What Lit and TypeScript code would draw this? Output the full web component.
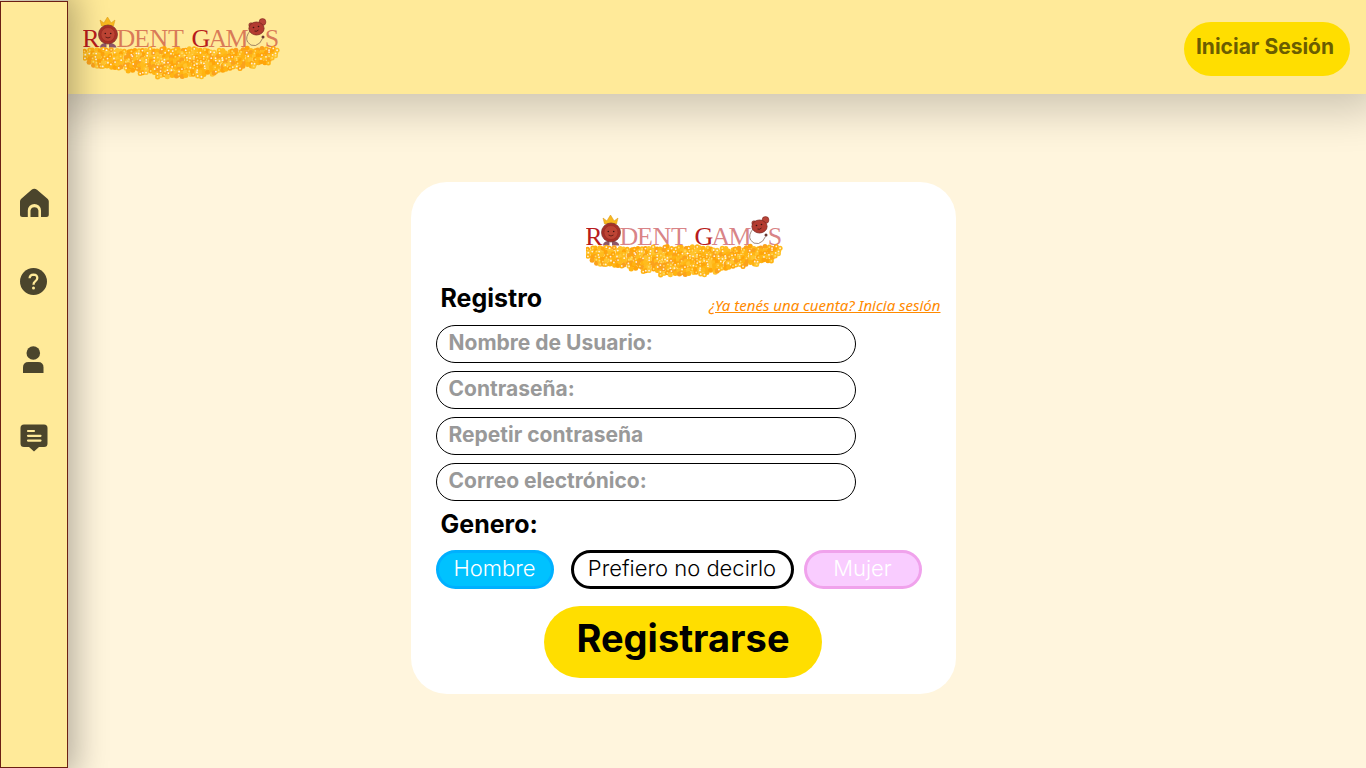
import { LitElement, html, svg, css } from "lit";
import { customElement } from "lit/decorators.js";

interface Grain {
  x: number;
  y: number;
  r: number;
  fill: string;
}

/* Upper and lower edge of the corn bed, as [x, top, bottom] in logo units. */
const BED: number[][] = [
  [0, 34, 39],
  [4, 32, 46],
  [9, 32, 51],
  [20, 32, 54],
  [42, 34, 55],
  [55, 32, 58],
  [75, 32, 61],
  [95, 32, 63],
  [115, 32, 63],
  [128, 33, 60],
  [145, 34, 55],
  [165, 32, 52],
  [185, 31, 49],
  [193, 32, 45],
  [197, 34, 40],
];

function edge(x: number, side: number): number {
  for (let i = 1; i < BED.length; i++) {
    if (x <= BED[i][0]) {
      const a = BED[i - 1];
      const b = BED[i];
      const t = (x - a[0]) / (b[0] - a[0]);
      return a[side] + (b[side] - a[side]) * t;
    }
  }
  return BED[BED.length - 1][side];
}

function makeGrains(): { grains: Grain[]; shine: Grain[] } {
  let seed = 11;
  const rnd = () => {
    seed = (seed * 16807) % 2147483647;
    return seed / 2147483647;
  };
  const fills = ["#ffb412", "#ffa50a", "#ffc42e", "#fba21c", "#ffbc1e"];
  const grains: Grain[] = [];
  const shine: Grain[] = [];
  for (let x = 2.5; x <= 194.5; x += 3.6) {
    const lift = Math.sin(x * 0.45) * 0.8;
    for (let y = edge(x, 1) + 2 + lift; y <= edge(x, 2) - 1 + lift; y += 3.2) {
      const gx = x + rnd() * 2 - 1;
      const gy = y + rnd() * 2 - 1;
      grains.push({ x: gx, y: gy, r: 2.5, fill: fills[Math.floor(rnd() * 5)] });
      if (rnd() < 0.5) {
        shine.push({
          x: gx,
          y: gy,
          r: 0.9,
          fill: rnd() < 0.6 ? "#fff0df" : "#ffdc70",
        });
      }
    }
  }
  return { grains, shine };
}

const { grains, shine } = makeGrains();

const LETTERS: [string, number, boolean][] = [
  ["R", 8, true],
  ["D", 43, false],
  ["E", 59, false],
  ["N", 76, false],
  ["T", 93, false],
  ["G", 118, true],
  ["A", 135, false],
  ["M", 154, false],
  ["S", 189, false],
];

@customElement("rodent-logo")
export class RodentLogo extends LitElement {
  static styles = css`
    :host {
      display: block;
      width: 197px;
    }
    .logo {
      display: block;
      width: 100%;
      height: auto;
    }
    .letter {
      font-family: "Liberation Serif", serif;
      font-size: 26px;
      text-anchor: middle;
      fill: rgba(184, 24, 32, 0.55);
    }
    .strong {
      fill: #b81c1c;
    }
  `;

  render() {
    return html`
      <svg class="logo" viewBox="0 0 197 64" role="img" aria-label="Rodent Games">
        ${LETTERS.map(
          ([c, x, strong]) =>
            svg`<text class=${strong ? "letter strong" : "letter"} x=${x} y="31">${c}</text>`
        )}
        <g>
          <path d="M18.500 10l-1.500-6 4 3 1-2 2.500-4 2.500 4 1 2 4-3-1.500 6z" fill="#f8b81e" stroke="#d99512" stroke-width=".5" />
          <path d="M17 31.500q0-4 5-4.500h1.500v4.500zM26 31.500v-4.500h1.500q5 0.500 6 4.500z" fill="#8d5668" />
          <circle cx="25" cy="18.500" r="9.500" fill="#a92f27" stroke="#7d3a32" stroke-width=".8" />
          <circle cx="25" cy="18.500" r="7" fill="#bd4434" stroke="#932b22" stroke-width=".6" />
          <circle cx="22.300" cy="17.500" r=".8" fill="#3b1512" />
          <circle cx="27.700" cy="17.500" r=".8" fill="#3b1512" />
          <path d="M22.500 21q2.500 2 5 0" fill="none" stroke="#4d1713" stroke-width=".8" />
        </g>
        <g>
          <path d="M167 15q-5 6-2.500 11 3 4.500 8 3.500 5-1.500 7-7" fill="none" stroke="#7a5a4a" stroke-width=".7" />
          <circle cx="180" cy="21" r="1.500" fill="#6b3a32" />
          <circle cx="179.500" cy="6" r="3.400" fill="#b84438" stroke="#7d2a22" stroke-width=".6" />
          <circle cx="168" cy="9" r="2.200" fill="#b84438" stroke="#7d2a22" stroke-width=".6" />
          <ellipse cx="173.500" cy="12.500" rx="7.600" ry="6.500" fill="#b33b30" stroke="#7d2a22" stroke-width=".8" />
          <circle cx="170.500" cy="11.500" r=".8" fill="#3b1512" />
          <circle cx="175.500" cy="10.500" r=".8" fill="#3b1512" />
          <path d="M171.500 15q2 1 4-1" fill="none" stroke="#3b1512" stroke-width=".8" />
        </g>
        ${grains.map((g) => svg`<circle cx=${g.x} cy=${g.y} r=${g.r} fill=${g.fill} />`)}
        ${shine.map((g) => svg`<circle cx=${g.x} cy=${g.y} r=${g.r} fill=${g.fill} />`)}
      </svg>
    `;
  }
}

@customElement("app-root")
export class AppRoot extends LitElement {
  static styles = css`
    :host {
      display: flex;
      min-height: 100vh;
      overflow: hidden;
      background: #fff5dd;
      font-family: Inter, "Liberation Sans", sans-serif;
      color: #000;
    }
    * {
      box-sizing: border-box;
    }
    .side {
      z-index: 2;
      width: 68px;
      flex: none;
      margin-top: 1px;
      padding-top: 186px;
      border: 1px solid #6b1f14;
      background: #ffea99;
      box-shadow: 0 0 32px 8px rgba(0, 0, 0, 0.29);
    }
    .nav {
      display: flex;
      flex-direction: column;
      align-items: center;
      gap: 48px;
    }
    .nav a {
      display: block;
      height: 30px;
    }
    .nav svg {
      display: block;
      width: 30px;
      height: 30px;
      fill: #4b452c;
    }
    .page {
      flex: 1;
      min-width: 0;
    }
    .top {
      display: flex;
      align-items: flex-start;
      justify-content: space-between;
      height: 94px;
      padding: 16px 16px 0 15px;
      background: #ffea99;
      box-shadow: 0 0 44px 16px rgba(0, 0, 0, 0.2);
    }
    button {
      border: 0;
      font-family: inherit;
      cursor: pointer;
    }
    .login {
      width: 166px;
      height: 54px;
      margin-top: 6px;
      padding: 0 4px 6px 0;
      border-radius: 27px;
      background: #ffde00;
      color: #6b5d00;
      font-size: 21px;
      font-weight: 700;
      white-space: nowrap;
    }
    .main {
      display: flex;
      justify-content: center;
      padding: 88px 68px 24px 0;
    }
    .card {
      display: flex;
      flex-direction: column;
      width: 545px;
      padding: 32px 15px 16px 25px;
      border-radius: 36px;
      background: #fff;
    }
    .brand {
      align-self: center;
      margin-right: 8px;
    }
    .head {
      display: flex;
      justify-content: space-between;
      align-items: flex-end;
      margin-top: 4px;
      padding-left: 5px;
    }
    .title {
      margin: 0;
      padding: 0;
      font-size: 25px;
      line-height: 32px;
      font-weight: 700;
    }
    .account {
      color: #ff8a00;
      font: italic 15px/18px "Noto Sans", "Open Sans", sans-serif;
      text-decoration: underline;
    }
    .fields {
      display: flex;
      flex-direction: column;
      gap: 8px;
      margin-top: 11px;
    }
    .field {
      width: 420px;
      height: 38px;
      padding: 0 12px 4px;
      border: 1px solid #000;
      border-radius: 19px;
      background: #fff;
      font-family: inherit;
      font-size: 21px;
      font-weight: 700;
      color: #222;
    }
    .field::placeholder {
      color: #999;
      opacity: 1;
    }
    .gender {
      display: grid;
      grid-template-columns: 125px 223px 118px;
      column-gap: 10px;
      row-gap: 10px;
      margin: 7px 0 0;
      padding: 0;
      border: 0;
    }
    .gender .title {
      margin-bottom: 10px;
      padding-left: 5px;
    }
    .pick {
      display: flex;
      align-items: center;
      justify-content: center;
      height: 39px;
      padding-bottom: 4px;
      border: 3px solid #000;
      border-radius: 20px;
      font-size: 22px;
      font-weight: 300;
      white-space: nowrap;
      cursor: pointer;
    }
    .pick input {
      appearance: none;
      width: 0;
      height: 0;
      margin: 0;
    }
    .man {
      width: 118px;
      border-color: #00b0ff;
      background: #00c2ff;
      color: #fff;
    }
    .woman {
      border-color: #f0a2ec;
      background: #f9ccff;
      color: #fff;
    }
    .submit {
      align-self: center;
      width: 278px;
      height: 72px;
      margin: 17px 10px 0 0;
      padding: 0 0 8px;
      border-radius: 36px;
      background: #ffde00;
      color: #000;
      font-size: 38px;
      font-weight: 700;
    }
  `;

  render() {
    return html`
      <aside class="side">
        <nav class="nav">
          <a href="#inicio" aria-label="Inicio">
            <svg viewBox="0 0 30 30">
              <path d="M1 13.500Q1 12 2.300 10.800L12.600 1.800Q15.300-.3 18 1.800L28.500 10.800Q29.800 12 29.800 13.500V26.500Q29.800 29 27.300 29H22V22.500A6.600 6.600 0 0 0 8.800 22.500V29H3.500Q1 29 1 26.500ZM11.500 29V22.500A4 4 0 0 1 19.400 22.500V29Z" />
            </svg>
          </a>
          <a href="#ayuda" aria-label="Ayuda">
            <svg viewBox="0 0 30 30">
              <circle cx="14.500" cy="15.500" r="13.500" />
              <path d="M10.600 12.200Q10.800 8.600 14.500 8.600 18.300 8.700 18.300 12.100 18.300 14 16.200 15.400 14.500 16.500 14.500 18.700" fill="none" stroke="#ffea99" stroke-width="2.300" />
              <circle cx="14.500" cy="22" r="1.500" fill="#ffea99" />
            </svg>
          </a>
          <a href="#perfil" aria-label="Perfil">
            <svg viewBox="0 0 30 30">
              <circle cx="14.300" cy="9" r="6.800" />
              <path d="M4 29V23.500Q4 18 9.500 18H19Q24.500 18 24.500 23.500V29Z" />
            </svg>
          </a>
          <a href="#mensajes" aria-label="Mensajes">
            <svg viewBox="0 0 30 30">
              <path d="M5 2.500H25Q28.500 2.500 28.500 6V21.500Q28.500 25 25 25H20L15 29.500 10 25H5Q1.500 25 1.500 21.500V6Q1.500 2.500 5 2.500Z" />
              <path d="M9 9H15M9 13.800H21.500M9 18.600H21.500" fill="none" stroke="#ffea99" stroke-width="2.200" stroke-linecap="round" />
            </svg>
          </a>
        </nav>
      </aside>
      <div class="page">
        <header class="top">
          <rodent-logo></rodent-logo>
          <button class="login" type="button">Iniciar Sesión</button>
        </header>
        <main class="main">
          <form class="card">
            <rodent-logo class="brand"></rodent-logo>
            <div class="head">
              <h1 class="title">Registro</h1>
              <a class="account" href="#sesion">¿Ya tenés una cuenta? Inicia sesión</a>
            </div>
            <div class="fields">
              <input class="field" type="text" aria-label="Nombre de Usuario" placeholder="Nombre de Usuario:" />
              <input class="field" type="password" aria-label="Contraseña" placeholder="Contraseña:" />
              <input class="field" type="password" aria-label="Repetir contraseña" placeholder="Repetir contraseña" />
              <input class="field" type="email" aria-label="Correo electrónico" placeholder="Correo electrónico:" />
            </div>
            <fieldset class="gender">
              <legend class="title">Genero:</legend>
              <label class="pick man"><input type="radio" name="genero" value="hombre" />Hombre</label>
              <label class="pick"><input type="radio" name="genero" value="otro" />Prefiero no decirlo</label>
              <label class="pick woman"><input type="radio" name="genero" value="mujer" />Mujer</label>
            </fieldset>
            <button class="submit" type="button">Registrarse</button>
          </form>
        </main>
      </div>
    `;
  }
}
